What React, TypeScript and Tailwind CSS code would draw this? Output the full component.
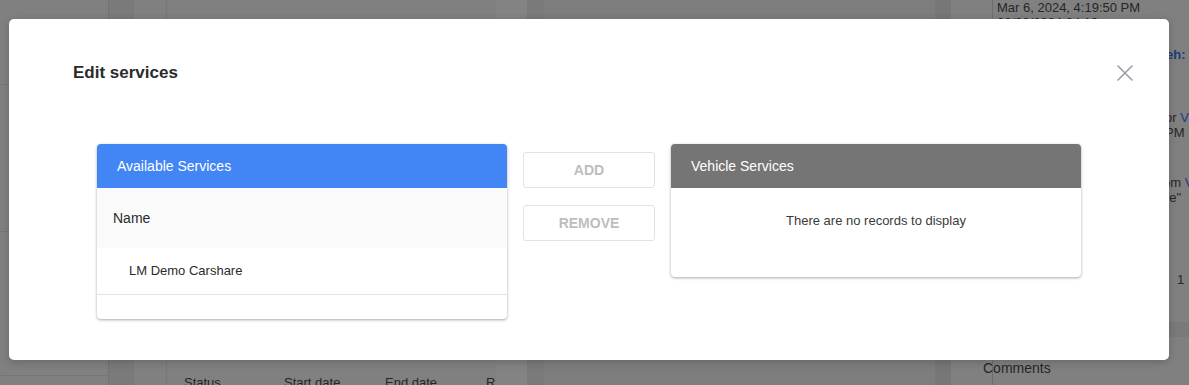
import React from 'react';

const font = { fontFamily: '"Liberation Sans", Arial, sans-serif' };

const CloseIcon = () => (
    <svg width="16" height="16" viewBox="0 0 16 16" fill="none" stroke="#9aa0a6" strokeWidth="1.6" strokeLinecap="round">
        <path d="M1 1 L15 15 M15 1 L1 15" />
    </svg>
);

const Background: React.FC = () => (
    <div className="flex w-full h-full bg-[#808080]">
        <div className="w-[109px] shrink-0 h-full border-r border-[#737373] flex flex-col">
            <div className="h-[85px] border-b border-[#767676]" />
            <div className="h-[147px] border-b border-[#767676]" />
            <div className="h-[144px] border-b border-[#767676]" />
        </div>
        <div className="w-[25px] shrink-0 h-full bg-[#7a7a7a]" />
        <div className="w-[33px] shrink-0 h-full border-r border-[#777]" />
        <div className="w-[329px] shrink-0 h-full flex flex-col justify-end">
            <div className="flex text-[13px] leading-[15px] text-[#262626] pl-[17px] translate-y-[5px]">
                <span className="w-[100px]">Status</span>
                <span className="w-[101px]">Start date</span>
                <span className="w-[101px]">End date</span>
                <span>R</span>
            </div>
        </div>
        <div className="w-[31px] shrink-0 h-full bg-[#838383]" />
        <div className="w-[17px] shrink-0 h-full bg-[#7a7a7a]" />
        <div className="w-[391px] shrink-0 h-full bg-[#7d7d7d]" />
        <div className="w-[16px] shrink-0 h-full bg-[#777]" />
        <div className="w-[42px] shrink-0 h-full bg-[#808080] border-r border-[#6e6e6e]" />
        <div className="flex-1 min-w-0 h-full flex flex-col text-[13px] text-[#262626] pl-[4px]">
            <div className="leading-[15px] whitespace-nowrap">Mar 6, 2024, 4:19:50 PM</div>
            <div className="leading-[15px] whitespace-nowrap">03/06/2024 04:19</div>
            <div className="pl-[169px] pt-[17px] leading-[15px] font-bold text-[#1c3c7a] whitespace-nowrap">eh: V</div>
            <div className="pl-[168px] pt-[48px] whitespace-nowrap leading-[15px]">or <span className="text-[#1c3c7a]">V</span></div>
            <div className="pl-[168px] whitespace-nowrap leading-[15px]">PM</div>
            <div className="pl-[166px] pt-[35px] whitespace-nowrap leading-[15px]">om <span className="text-[#1c3c7a]">V</span></div>
            <div className="pl-[168px] whitespace-nowrap leading-[15px]">re"</div>
            <div className="pl-[180px] pt-[67px] leading-[15px]">1</div>
            <div className="mt-[35px] h-[15px] bg-[#7a7a7a] -ml-[4px]" />
            <div className="pt-[23px] text-[14px] leading-[16px] -ml-[14px] whitespace-nowrap">Comments</div>
        </div>
    </div>
);

const App: React.FC = () => {
    return (
        <div className="relative w-[1189px] h-[385px] overflow-hidden" style={font}>
            <Background />

            <div className="absolute left-[9px] top-[19px] w-[1160px] h-[341px] bg-white rounded-[5px] shadow-[0_2px_8px_rgba(0,0,0,0.2)] flex flex-col">
                <div className="flex items-center justify-between pl-[64px] pr-[36px] pt-[42px]">
                    <h2 className="text-[17px] leading-[24px] font-bold text-[#2b2b2b]">Edit services</h2>
                    <button className="w-[16px] h-[16px] flex items-center justify-center">
                        <CloseIcon />
                    </button>
                </div>

                <div className="flex items-start pl-[88px] mt-[59px] gap-[16px]">
                    <div className="w-[410px] rounded-[4px] bg-white shadow-[0_1px_3px_rgba(0,0,0,0.35)] overflow-hidden">
                        <div className="h-[44px] bg-[#4285f4] flex items-center px-[20px] text-white text-[14px]">
                            Available Services
                        </div>
                        <div className="h-[60px] bg-[#fafafa] flex items-center pl-[16px] text-[14px] font-medium text-[#2b2b2b]">
                            Name
                        </div>
                        <div className="h-[47px] flex items-center pl-[32px] text-[13px] text-[#2b2b2b] border-b border-[#e3e3e3]">
                            LM Demo Carshare
                        </div>
                        <div className="h-[24px]" />
                    </div>

                    <div className="w-[132px] flex flex-col pt-[8px] gap-[17px]">
                        <button className="h-[36px] border border-[#e2e2e2] rounded-[3px] text-[14px] font-bold text-[#bdbdbd]">
                            ADD
                        </button>
                        <button className="h-[36px] border border-[#e2e2e2] rounded-[3px] text-[14px] font-bold text-[#bdbdbd]">
                            REMOVE
                        </button>
                    </div>

                    <div className="w-[410px] rounded-[4px] bg-white shadow-[0_1px_3px_rgba(0,0,0,0.35)] overflow-hidden">
                        <div className="h-[44px] bg-[#757575] flex items-center px-[20px] text-white text-[14px]">
                            Vehicle Services
                        </div>
                        <div className="h-[89px] flex justify-center pt-[25px] text-[13px] leading-[16px] text-[#3a3a3a]">
                            There are no records to display
                        </div>
                    </div>
                </div>
            </div>
        </div>
    );
};

export default App;
